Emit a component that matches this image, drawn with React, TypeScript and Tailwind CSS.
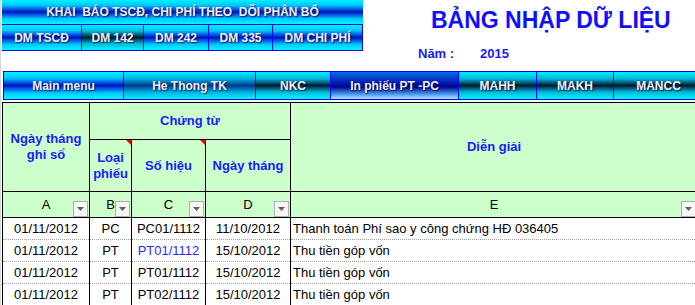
const blueGrad =
  "bg-[linear-gradient(to_bottom,#00f0ff_0%,#00c8ff_22%,#0010c8_50%,#00c8ff_78%,#00f8ff_100%)]"
const darkGrad =
  "bg-[linear-gradient(to_bottom,#00f0ff_0%,#00b8d8_25%,#001830_50%,#00b8d8_75%,#00f8ff_100%)]"
const tealGrad =
  "bg-[linear-gradient(to_bottom,#00f0ff_0%,#00b0e0_25%,#003890_50%,#00b0e0_75%,#00f8ff_100%)]"
const inGrad =
  "bg-[linear-gradient(to_bottom,#0070e0_0%,#0030c0_30%,#000090_55%,#4090e8_80%,#b0e8ff_100%)]"

const btnText =
  "text-[12px] font-bold text-[#eeeeff] [text-shadow:1px_1px_1px_rgba(0,0,40,0.7)] whitespace-nowrap"

const topButtons = [
  { label: "DM TSCĐ", w: "w-[80px]", bg: blueGrad },
  { label: "DM 142", w: "w-[62px]", bg: darkGrad },
  { label: "DM 242", w: "w-[65px]", bg: blueGrad },
  { label: "DM 335", w: "w-[64px]", bg: blueGrad },
  { label: "DM CHI PHÍ", w: "w-[90px]", bg: blueGrad },
]

const navButtons = [
  { label: "Main menu", w: "w-[120px]", bg: blueGrad },
  { label: "He Thong TK", w: "w-[132px]", bg: tealGrad },
  { label: "NKC", w: "w-[75px]", bg: darkGrad },
  { label: "In phiếu PT -PC", w: "w-[128px]", bg: inGrad },
  { label: "MAHH", w: "w-[78px]", bg: darkGrad },
  { label: "MAKH", w: "w-[77px]", bg: darkGrad },
  { label: "MANCC", w: "w-[90px]", bg: darkGrad },
]

const rows = [
  { a: "01/11/2012", b: "PC", c: "PC01/1112", d: "11/10/2012", e: "Thanh toán Phí sao y công chứng HĐ 036405", blue: false },
  { a: "01/11/2012", b: "PT", c: "PT01/1112", d: "15/10/2012", e: "Thu tiền góp vốn", blue: true },
  { a: "01/11/2012", b: "PT", c: "PT01/1112", d: "15/10/2012", e: "Thu tiền góp vốn", blue: false },
  { a: "01/11/2012", b: "PT", c: "PT02/1112", d: "15/10/2012", e: "Thu tiền góp vốn", blue: false },
]

const Drop = () => (
  <div className="absolute right-[1px] bottom-0 w-[15px] h-[16px] border border-[#b0b0b0] bg-[#f6f6f6] flex items-center justify-center">
    <svg width="7" height="4" viewBox="0 0 7 4">
      <polygon points="0,0 7,0 3.5,4" fill="#606060" />
    </svg>
  </div>
)

const RedMark = () => (
  <div className="absolute top-0 right-0 w-0 h-0 border-l-[5px] border-l-transparent border-t-[5px] border-t-[#ff0000]" />
)

const head = "border border-black bg-[#ccffcc] text-[#1a1aff] font-bold text-[13px] leading-[16px] text-center align-middle"
const cell = "border-x border-b border-black border-b-[#a0a0a0] [border-bottom-style:dotted] p-0"

export default function App() {
  return (
    <div className="w-[695px] h-[305px] overflow-hidden bg-white border-l border-[#d8d8d8] font-['Liberation_Sans',Arial,sans-serif]">
      <div className="flex h-[71px]">
        <div className="ml-[1px] w-[361px] flex flex-col">
          <div className={`h-[24px] flex items-center justify-center ${blueGrad}`}>
            <span className={btnText}>KHAI&nbsp; BÁO TSCĐ, CHI PHÍ THEO&nbsp; DÕI PHÂN BỔ</span>
          </div>
          <div className="h-[27px] flex border-t border-b border-r border-[#0000ff]">
            {topButtons.map((b, i) => (
              <div
                key={b.label}
                className={`${b.w} h-full flex items-center justify-center ${b.bg} ${i < topButtons.length - 1 ? "border-r border-[#0000ff]" : "flex-1"}`}
              >
                <span className={btnText}>{b.label}</span>
              </div>
            ))}
          </div>
        </div>
        <div className="flex-1 pl-[68px] pt-[7px]">
          <div className="text-[23px] leading-[26px] font-bold text-[#1010ff] whitespace-nowrap">BẢNG NHẬP DỮ LIỆU</div>
          <div className="flex mt-[11px] -ml-[13px] text-[13px] font-bold text-[#1a1aff]">
            <span className="w-[62px]">Năm :</span>
            <span>2015</span>
          </div>
        </div>
      </div>

      <div className="ml-[2px] h-[29px] w-[720px] flex border border-[#0000ff]">
        {navButtons.map((b) => (
          <div key={b.label} className={`${b.w} shrink-0 h-full flex items-center justify-center border-r border-[#0000ff] ${b.bg}`}>
            <span className={btnText}>{b.label}</span>
          </div>
        ))}
      </div>

      <table className="mt-[2px] ml-[1px] table-fixed border-collapse w-[696px]">
        <colgroup>
          <col className="w-[87px]" />
          <col className="w-[42px]" />
          <col className="w-[74px]" />
          <col className="w-[85px]" />
          <col />
        </colgroup>
        <tbody>
          <tr className="h-[37px]">
            <td rowSpan={2} className={head}>
              Ngày tháng
              <br />
              ghi sổ
            </td>
            <td colSpan={3} className={head}>
              Chứng từ
            </td>
            <td rowSpan={2} className={head}>
              Diễn giải
            </td>
          </tr>
          <tr className="h-[52px]">
            <td className={`${head} relative`}>
              Loại
              <br />
              phiếu
              <RedMark />
            </td>
            <td className={`${head} relative`}>
              Số hiệu
              <RedMark />
            </td>
            <td className={head}>Ngày tháng</td>
          </tr>
          <tr className="h-[26px]">
            {["A", "B", "C", "D", "E"].map((l) => (
              <td key={l} className="border border-black bg-[#ccffcc] p-0">
                <div className="relative h-[25px] flex items-center justify-center text-[13px] text-black">
                  {l}
                  <Drop />
                </div>
              </td>
            ))}
          </tr>
          {rows.map((r, i) => (
            <tr key={i} className="h-[22px] text-[13px] text-black">
              <td className={`${cell} text-center`}>{r.a}</td>
              <td className={`${cell} text-center`}>{r.b}</td>
              <td className={`${cell} text-center ${r.blue ? "text-[#2a2aff]" : ""}`}>{r.c}</td>
              <td className={`${cell} text-center`}>{r.d}</td>
              <td className={`${cell} pl-[2px] whitespace-nowrap`}>{r.e}</td>
            </tr>
          ))}
        </tbody>
      </table>
    </div>
  )
}
